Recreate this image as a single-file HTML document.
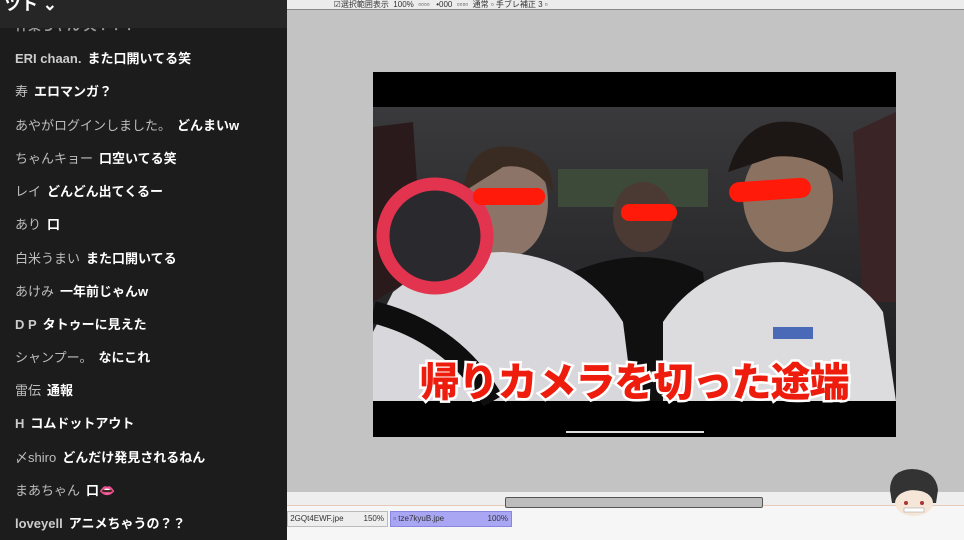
<!DOCTYPE html>
<html><head><meta charset="utf-8"><style>
*{margin:0;padding:0;box-sizing:border-box}
body{width:964px;height:540px;overflow:hidden;position:relative;background:#c3c3c3;font-family:"Liberation Sans","Noto Sans CJK JP",sans-serif}
#chat{position:absolute;left:0;top:0;width:287px;height:540px;background:#1c1c1c}
#hdr{position:absolute;left:0;top:0;width:287px;height:28px;background:#262626;color:#fff;font-size:17px;font-weight:bold;line-height:10px;padding-left:4px;overflow:hidden;z-index:2}
.l{position:absolute;left:15px;font-size:13px;font-weight:bold;color:#fff;white-space:nowrap;line-height:16px}
.l span{color:#bdbdbd;font-weight:normal;margin-right:6px}
#tb{position:absolute;left:287px;top:0;width:677px;height:10px;background:#ececec;border-bottom:1px solid #888;font-size:8px;color:#333;line-height:9px}
#bot{position:absolute;left:287px;top:498px;width:677px;height:42px;background:#f6f6f6}
</style></head><body>
<div id="chat">
<div id="hdr">ツト ⌄</div>
<div class="l" style="top:18px;color:#999">神楽ちゃん 天！！！</div>
<div class="l" style="top:51px"><span style="font-weight:bold;color:#ccc">ERI chaan.</span>また口開いてる笑</div>
<div class="l" style="top:84px"><span>寿</span>エロマンガ？</div>
<div class="l" style="top:118px"><span>あやがログインしました。</span>どんまいw</div>
<div class="l" style="top:151px"><span>ちゃんキョー</span>口空いてる笑</div>
<div class="l" style="top:184px"><span>レイ</span>どんどん出てくるー</div>
<div class="l" style="top:217px"><span>あり</span>口</div>
<div class="l" style="top:251px"><span>白米うまい</span>また口開いてる</div>
<div class="l" style="top:284px"><span>あけみ</span>一年前じゃんw</div>
<div class="l" style="top:317px"><span style="font-weight:bold;color:#ccc">D P</span>タトゥーに見えた</div>
<div class="l" style="top:350px"><span>シャンプー。</span>なにこれ</div>
<div class="l" style="top:383px"><span>雷伝</span>通報</div>
<div class="l" style="top:416px"><span style="font-weight:bold;color:#ccc">H</span>コムドットアウト</div>
<div class="l" style="top:450px"><span>〆shiro</span>どんだけ発見されるねん</div>
<div class="l" style="top:483px"><span>まあちゃん</span>口<b style="color:#e0507a">👄</b></div>
<div class="l" style="top:516px"><span style="font-weight:bold;color:#ccc">loveyell</span>アニメちゃうの？？</div>
</div>
<div id="tb">&nbsp;&nbsp;&nbsp;&nbsp;&nbsp;&nbsp;&nbsp;&nbsp;&nbsp;&nbsp;&nbsp;&nbsp;&nbsp;&nbsp;&nbsp;&nbsp;&nbsp;&nbsp;&nbsp;&nbsp;&nbsp;☑選択範囲表示 &nbsp;100% &nbsp;▫▫▫▫ &nbsp;&nbsp;•000 &nbsp;▫▫▫▫ &nbsp;通常 ▫ 手ブレ補正 3 ▫</div>
<svg style="position:absolute;left:373px;top:72px" width="523" height="365">
<rect width="523" height="365" fill="#000"/>
<defs><linearGradient id="g" x1="0" y1="0" x2="0" y2="1"><stop offset="0" stop-color="#3a3a3c"/><stop offset="1" stop-color="#1c1c1e"/></linearGradient></defs>
<rect y="35" width="523" height="294" fill="url(#g)"/>
<rect x="185" y="97" width="150" height="38" fill="#3d4a3a"/>
<path d="M0 55 L40 50 L50 200 L0 230Z" fill="#2a1a1c"/>
<path d="M480 60 L523 40 L523 230 L490 230Z" fill="#3a2426"/>
<ellipse cx="270" cy="145" rx="30" ry="35" fill="#4a3a33"/>
<path d="M200 200 Q270 170 330 200 L345 329 L200 329Z" fill="#101010"/>
<ellipse cx="135" cy="130" rx="40" ry="55" fill="#8c7568"/>
<path d="M90 120 Q95 70 140 75 Q180 80 180 120 Q160 90 130 95Z" fill="#3a2b22"/>
<path d="M20 220 Q70 180 130 180 Q210 185 250 250 L260 329 L0 329 L0 260Z" fill="#d8d8dc"/>
<ellipse cx="415" cy="125" rx="45" ry="55" fill="#8a7160"/>
<path d="M355 100 Q370 45 420 50 Q470 55 470 110 Q440 80 400 85Z" fill="#1c1614"/>
<path d="M290 250 Q330 190 410 190 Q480 195 510 240 L523 329 L290 329Z" fill="#dcdcdf"/>
<rect x="400" y="255" width="40" height="12" fill="#4a6ab8"/>
<path d="M0 240 Q80 260 120 329" stroke="#0e0e0e" stroke-width="22" fill="none"/>
<circle cx="62" cy="164" r="52" fill="#2a2a2e" stroke="#e2334f" stroke-width="13"/>
<rect x="100" y="116" width="72" height="17" rx="8" fill="#ff1a0a"/>
<rect x="248" y="132" width="56" height="17" rx="8" fill="#ff1a0a"/>
<rect x="356" y="108" width="82" height="20" rx="10" fill="#ff1a0a" transform="rotate(-4 397 118)"/>
<text x="261" y="324" text-anchor="middle" font-family="Noto Sans CJK JP,sans-serif" font-weight="900" font-size="40" fill="#ee1c0c" stroke="#fff" stroke-width="5" paint-order="stroke" letter-spacing="-1">帰りカメラを切った途端</text>
<rect x="193" y="359" width="138" height="2" fill="#ddd"/>
</svg>
<div id="bot">
<div style="position:absolute;left:0;top:-6px;width:677px;height:14px;background:#eeeeee;border-bottom:1px solid #e8c9b8"></div>
<div style="position:absolute;left:218px;top:-1px;width:258px;height:11px;background:#bdbdbd;border:1px solid #555;border-radius:2px"></div>
<div style="position:absolute;left:0;top:13px;width:101px;height:16px;background:#eee;border:1px solid #bbb;font-size:8px;line-height:14px;color:#333">&nbsp;2GQt4EWF.jpe<span style="float:right;margin-right:3px">150%</span></div>
<div style="position:absolute;left:103px;top:13px;width:122px;height:16px;background:#a9a6f4;border:1px solid #8a86e0;font-size:8px;line-height:14px;color:#333">&nbsp;▫ tze7kyuB.jpe<span style="float:right;margin-right:3px">100%</span></div>
</div>
<svg style="position:absolute;left:884px;top:465px" width="60" height="55">
<path d="M6 25 Q6 5 28 4 Q52 5 54 25 L52 38 L8 38Z" fill="#333"/>
<ellipse cx="30" cy="38" rx="19" ry="13" fill="#f5e6d8"/>
<path d="M10 30 Q25 20 50 30 L50 22 Q30 14 10 22Z" fill="#333"/>
<circle cx="22" cy="38" r="2" fill="#a33"/><circle cx="38" cy="38" r="2" fill="#a33"/>
<rect x="20" y="43" width="20" height="4" fill="#fff" stroke="#999" stroke-width=".5"/>
</svg>
</body></html>
